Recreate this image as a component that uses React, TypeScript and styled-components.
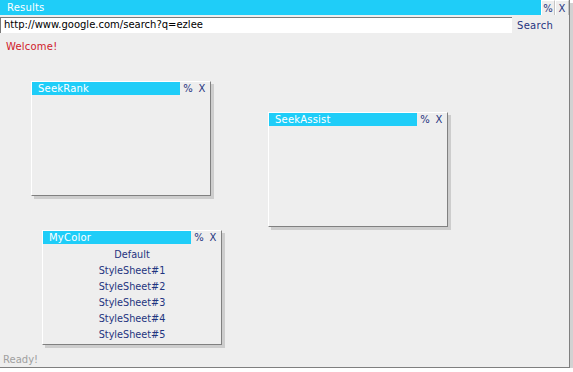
import React from 'react';
import styled, { createGlobalStyle } from 'styled-components';

const CYAN = '#1fcdf8';
const NAVY = '#1f3480';
const FONT = '"DejaVu Sans", Verdana, sans-serif';

const GlobalStyle = createGlobalStyle`
    html, body {
        margin: 0;
        padding: 0;
        background: #ffffff;
    }
    body {
        font-family: ${FONT};
        font-size: 10px;
    }
`;

const Frame = styled.div`
    position: relative;
    box-sizing: border-box;
    width: 570px;
    height: 368px;
    background: #eeeeee;
    border-right: 1px solid #7f7f7f;
    border-bottom: 1px solid #7f7f7f;
    box-shadow: 3px 3px 0 #d2d2d2;
    display: flex;
    flex-direction: column;
`;

const TitleRow = styled.div<{ height: number }>`
    display: flex;
    align-items: stretch;
    height: ${props => props.height}px;
    flex: 0 0 auto;
`;

const TitleBar = styled.div<{ indent: number }>`
    flex: 1 1 auto;
    background: ${CYAN};
    color: #ffffff;
    padding-left: ${props => props.indent}px;
    display: flex;
    align-items: center;
    letter-spacing: 0.2px;
`;

const Control = styled.div<{ boxed?: boolean }>`
    flex: 0 0 14px;
    display: flex;
    align-items: center;
    justify-content: center;
    color: ${NAVY};
    cursor: pointer;
    box-sizing: border-box;
    border-left: ${props => (props.boxed ? '1px solid #ffffff' : 'none')};
    border-top: ${props => (props.boxed ? '1px solid #ffffff' : 'none')};
    border-right: ${props => (props.boxed ? '1px solid #c4c4c4' : 'none')};
`;

const AddressRow = styled.div`
    display: flex;
    align-items: center;
    margin-top: 2px;
    height: 16px;
`;

const Address = styled.div`
    box-sizing: border-box;
    width: 512px;
    height: 16px;
    background: #ffffff;
    border-top: 1px solid #7a7a7a;
    border-left: 1px solid #7a7a7a;
    color: #000000;
    padding-left: 3px;
    line-height: 14px;
    white-space: nowrap;
    overflow: hidden;
`;

const SearchLink = styled.span`
    margin-left: 5px;
    color: ${NAVY};
    letter-spacing: 0.3px;
    cursor: pointer;
`;

const Welcome = styled.div`
    margin: 8px 0 0 6px;
    color: #d0202a;
    letter-spacing: 0.2px;
`;

const Spacer = styled.div`
    flex: 1 1 auto;
`;

const Status = styled.div`
    color: #a0a0a0;
    padding: 0 0 2px 3px;
`;

const Window = styled.div<{ left: number; top: number; w: number; h: number }>`
    position: absolute;
    left: ${props => props.left}px;
    top: ${props => props.top}px;
    width: ${props => props.w}px;
    height: ${props => props.h}px;
    box-sizing: border-box;
    background: #eeeeee;
    border-top: 1px solid #ffffff;
    border-left: 1px solid #ffffff;
    border-right: 1px solid #808080;
    border-bottom: 1px solid #808080;
    box-shadow: 3px 3px 0 #cdcdcd;
    display: flex;
    flex-direction: column;
`;

const Controls = styled.div`
    display: flex;
    flex: 0 0 29px;
    padding-left: 1px;
`;

const List = styled.div`
    padding-top: 3px;
    display: flex;
    flex-direction: column;
    align-items: center;
`;

const Item = styled.div`
    height: 16px;
    line-height: 16px;
    font-size: 9.7px;
    color: ${NAVY};
    cursor: pointer;
`;

type PaneProps = {
    title: string;
    left: number;
    top: number;
    w: number;
    h: number;
    children?: React.ReactNode;
};

const Pane = ({ title, left, top, w, h, children }: PaneProps) => (
    <Window left={left} top={top} w={w} h={h}>
        <TitleRow height={13}>
            <TitleBar indent={6}>{title}</TitleBar>
            <Controls>
                <Control>%</Control>
                <Control>X</Control>
            </Controls>
        </TitleRow>
        {children}
    </Window>
);

const sheets = ['Default', 'StyleSheet#1', 'StyleSheet#2', 'StyleSheet#3', 'StyleSheet#4', 'StyleSheet#5'];

const App = () => (
    <>
        <GlobalStyle />
        <Frame>
            <TitleRow height={15}>
                <TitleBar indent={7}>Results</TitleBar>
                <Control boxed>%</Control>
                <Control boxed>X</Control>
            </TitleRow>
            <AddressRow>
                <Address>http://www.google.com/search?q=ezlee</Address>
                <SearchLink>Search</SearchLink>
            </AddressRow>
            <Welcome>Welcome!</Welcome>
            <Spacer />
            <Status>Ready!</Status>

            <Pane title="SeekRank" left={31} top={81} w={180} h={115} />
            <Pane title="SeekAssist" left={268} top={112} w={180} h={115} />
            <Pane title="MyColor" left={42} top={230} w={180} h={115}>
                <List>
                    {sheets.map(s => (
                        <Item key={s}>{s}</Item>
                    ))}
                </List>
            </Pane>
        </Frame>
    </>
);

export default App;
